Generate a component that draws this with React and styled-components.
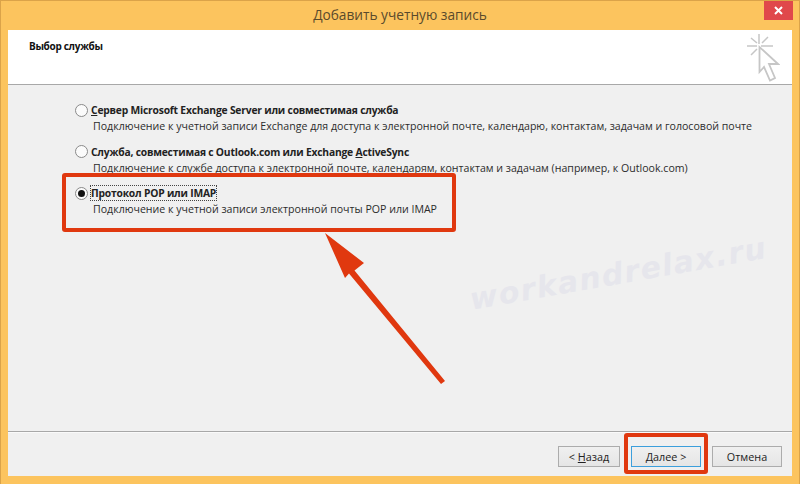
import React from "react";
import styled, { createGlobalStyle } from "styled-components";

const Global = createGlobalStyle`
  html, body { margin: 0; padding: 0; background: #fcc45e; }
  #root { width: 800px; height: 484px; overflow: hidden; }
`;
const Win = styled.div`
  position: relative; width: 800px; height: 484px; box-sizing: border-box;
  background: #fcc45e; border: 1px solid #dba349; border-bottom: 0;
  padding: 0 7px 8px 7px; display: flex; flex-direction: column; overflow: hidden;
  font-family: "Open Sans", "Noto Sans", sans-serif; color: #1a1a1a;
`;
const TitleBar = styled.div`
  height: 29px; flex: none; display: flex; align-items: center; justify-content: center;
  font-size: 13.7px; color: #5a4a2c; padding-bottom: 2px; box-sizing: border-box;
`;
const Close = styled.div`
  position: absolute; top: 0; right: 6px; width: 29px; height: 19px; background: #e0484b;
  display: flex; align-items: center; justify-content: center;
`;
const Body = styled.div`
  flex: 1; display: flex; flex-direction: column; background: #f0f0f0; min-height: 0;
`;
const Header = styled.div`
  height: 55px; flex: none; background: #fff; border-bottom: 1px solid #a8a8a8;
  display: flex; justify-content: space-between; padding: 0 12px 0 21px; box-sizing: border-box;
`;
const HeaderTitle = styled.div`
  font-size: 10px; font-weight: 700; letter-spacing: -0.3px; color: #111; line-height: 16px; margin-top: 8px;
`;
const HeaderIcon = styled.svg`
  flex: none; margin-top: 3px;
`;
const Main = styled.div`
  flex: 1; padding: 17px 0 0 67px; display: flex; flex-direction: column; gap: 9.500px; min-height: 0;
`;
const Option = styled.div`
  display: flex; flex-direction: column; height: 32px;
`;
const OptionHead = styled.div`
  display: flex; align-items: center; gap: 3px; height: 16px;
`;
const Radio = styled.span`
  width: 11px; height: 11px; flex: none; border-radius: 50%; background: #fbfbfb;
  border: 1px solid #8a8a8a; display: flex; align-items: center; justify-content: center;
  &::after {
    content: ""; width: 7px; height: 7px; border-radius: 50%;
    background: ${p => (p.$on ? "#111" : "transparent")};
  }
`;
const OptionLabel = styled.span`
  font-size: 10.3px; font-weight: 700; letter-spacing: -0.2px; color: #222; white-space: nowrap; line-height: 14px;
  outline: ${p => (p.$focus ? "1px dotted #444" : "none")};
  u { text-underline-offset: 1px; }
`;
const OptionDesc = styled.div`
  font-size: 10.6px; color: #2c2c2c; margin: 1px 0 0 18px; white-space: nowrap; line-height: 15px;
`;
const Footer = styled.div`
  height: 45px; flex: none; border-top: 1px solid #a8a8a8; box-shadow: inset 0 1px 0 #fafafa;
  display: flex; align-items: flex-start; justify-content: flex-end;
  padding: 14px 10px 0 0; box-sizing: border-box; gap: 11px;
`;
const Btn = styled.div`
  width: ${p => p.$w}px; height: 21px; box-sizing: border-box; flex: none;
  border: 1px solid ${p => (p.$primary ? "#3c9fdc" : "#acacac")};
  background: linear-gradient(#f0f0f0, #e5e5e5);
  font-size: 10.8px; color: #222; display: flex; align-items: center; justify-content: center;
  white-space: pre;
`;
const Overlay = styled.svg`
  position: absolute; left: -1px; top: -1px; pointer-events: none;
`;
const Mark = styled.div`
  position: absolute; left: 469px; top: 281px; font: italic 700 30px "DejaVu Sans", sans-serif;
  letter-spacing: 1.5px; color: #e6e6ec; white-space: nowrap;
  transform: rotate(-10deg); transform-origin: left center;
`;

const CursorIcon = () => (
  <HeaderIcon width="35" height="50" viewBox="0 0 35 50" fill="none" stroke="#c6c6c6">
    <path d="M14 1V11M2 13H12M16 13H28M6 5L12 10M23 4L17 10M6 22L12 16" strokeWidth="1.5" />
    <path d="M14.500 14V39L19 34L25 47.500L30 45L24 31H33Z" strokeWidth="1.8" fill="#fff" />
  </HeaderIcon>
);

const options = [
  { key: 1, label: <><u>С</u>ервер Microsoft Exchange Server или совместимая служба</>, desc: "Подключение к учетной записи Exchange для доступа к электронной почте, календарю, контактам, задачам и голосовой почте" },
  { key: 2, label: <>Служба, совместимая с Outlook.com или Exchange <u>A</u>ctiveSync</>, desc: "Подключение к службе доступа к электронной почте, календарям, контактам и задачам (например, к Outlook.com)" },
  { key: 3, on: true, label: <>Протокол POP или IMAP</>, desc: "Подключение к учетной записи электронной почты POP или IMAP" },
];

export default function App() {
  return (
    <>
      <Global />
      <Win>
        <TitleBar>Добавить учетную запись</TitleBar>
        <Close>
          <svg width="9" height="9" viewBox="0 0 9 9" stroke="#fff" strokeWidth="2"><path d="M1 1L8 8M8 1L1 8" /></svg>
        </Close>
        <Body>
          <Header>
            <HeaderTitle>Выбор службы</HeaderTitle>
            <CursorIcon />
          </Header>
          <Main>
            {options.map(o => (
              <Option key={o.key}>
                <OptionHead>
                  <Radio $on={o.on} />
                  <OptionLabel $focus={o.on}>{o.label}</OptionLabel>
                </OptionHead>
                <OptionDesc>{o.desc}</OptionDesc>
              </Option>
            ))}
          </Main>
          <Footer>
            <Btn $w={62}><span>&lt; <u>Н</u>азад</span></Btn>
            <Btn $w={70} $primary><span><u>Д</u>алее &gt;</span></Btn>
            <Btn $w={70}>Отмена</Btn>
          </Footer>
        </Body>
        <Mark>workandrelax.ru</Mark>
        <Overlay width="800" height="484" viewBox="0 0 800 484">
          <rect x="64" y="175" width="390" height="55" fill="none" stroke="#e0380f" strokeWidth="4" rx="1" />
          <rect x="626" y="435" width="80" height="37" fill="none" stroke="#e0380f" strokeWidth="4" rx="1" />
          <path d="M325 233L364 263L354.5 270.5L445 381L441 384L349 273.500L345 278Z" fill="#e0380f" />
        </Overlay>
      </Win>
    </>
  );
}
